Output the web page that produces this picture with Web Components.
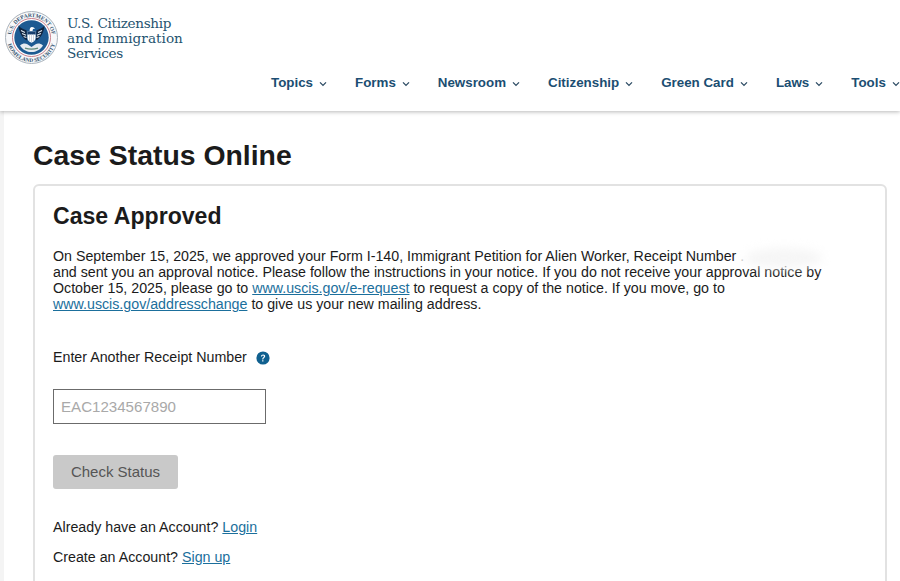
<!DOCTYPE html>
<html lang="en">
<head>
<meta charset="utf-8">
<title>Case Status Online</title>
<style>
  html, body { margin: 0; height: 581px; overflow: hidden; background: #fff; }
  body { font-family: "Liberation Sans", Arial, sans-serif; color: #1b1b1b; }
</style>
</head>
<body>
<uscis-page>
  <uscis-header slot="header"></uscis-header>
  <status-card heading="Case Approved">
    <case-message></case-message>
    <receipt-form></receipt-form>
    <account-links></account-links>
  </status-card>
</uscis-page>

<script>
class UscisPage extends HTMLElement {
  constructor() {
    super();
    this.attachShadow({ mode: 'open' }).innerHTML = `
      <style>
        :host { display: block; height: 581px; overflow: hidden; }
        main {
          margin-left: 4px;
          padding: 27px 14px 0 29px;
          background: #fff;
        }
        .wrap { background: #f4f4f4; height: 470px; }
        h1 {
          margin: 0 0 12px;
          font-size: 28.4px;
          line-height: 34px;
          font-weight: 700;
          color: #1b1b1b;
        }
      </style>
      <slot name="header"></slot>
      <div class="wrap">
        <main>
          <h1>Case Status Online</h1>
          <slot></slot>
        </main>
      </div>
    `;
  }
}

class UscisHeader extends HTMLElement {
  constructor() {
    super();
    const items = ['Topics', 'Forms', 'Newsroom', 'Citizenship', 'Green Card', 'Laws', 'Tools'];
    this.attachShadow({ mode: 'open' }).innerHTML = `
      <style>
        :host {
          display: block;
          height: 111px;
          box-sizing: border-box;
          background: #fff;
          box-shadow: 0 1px 4px rgba(0, 0, 0, .28);
          position: relative;
          overflow: hidden;
        }
        .brand { display: flex; align-items: flex-start; gap: 9px; padding: 11px 0 0 5px; }
        .name {
          font-family: "DejaVu Serif", "Liberation Serif", serif;
          font-size: 13.6px;
          line-height: 15px;
          color: #25536f;
          padding-top: 5px;
        }
        .l1 { letter-spacing: -.32px; }
        .l2 { letter-spacing: .03px; }
        nav { display: flex; padding: 10px 0 0 271px; white-space: nowrap; }
        a {
          display: flex;
          flex: none;
          align-items: center;
          gap: 6px;
          font-size: 13.35px;
          line-height: 18px;
          font-weight: 700;
          color: #1b4e72;
          text-decoration: none;
        }
        a + a { margin-left: 28px; }
        svg.chev { width: 8px; height: 6px; margin-top: 1px; }
      </style>
      <div class="brand">
        <dhs-seal></dhs-seal>
        <div class="name"><span class="l1">U.S. Citizenship</span><br><span class="l2">and Immigration</span><br><span class="l1">Services</span></div>
      </div>
      <nav>
        ${items.map((t) => `<a href="#">${t}<svg class="chev" viewBox="0 0 8 6"><path d="M1 1.4 4 4.4 7 1.4" fill="none" stroke="#2b4a63" stroke-width="1.3"/></svg></a>`).join('')}
      </nav>
    `;
  }
}

class DhsSeal extends HTMLElement {
  constructor() {
    super();
    this.attachShadow({ mode: 'open' }).innerHTML = `
      <style>
        :host { display: block; width: 53px; height: 53px; flex: none; }
        svg { display: block; width: 53px; height: 53px; }
        text { font-family: "Liberation Serif", serif; font-size: 5.5px; font-weight: 700; fill: #33536f; }
      </style>
      <svg viewBox="0 0 53 53">
        <defs>
          <path id="top" d="M6.31 30.06A20.5 20.5 0 1 1 46.69 30.06"/>
          <path id="bot" d="M2.09 28.64A24.5 24.5 0 0 0 50.91 28.64"/>
        </defs>
        <circle cx="26.5" cy="26.5" r="26" fill="#f7f8fa" stroke="#a9b2bb" stroke-width="1"/>
        <circle cx="26.5" cy="26.5" r="19" fill="#fff" stroke="#c2707f" stroke-width=".9"/>
        <circle cx="26.5" cy="26.5" r="17.2" fill="#1d5a92"/>
        <text><textPath href="#top" startOffset="50%" text-anchor="middle">U.S. DEPARTMENT OF</textPath></text>
        <text><textPath href="#bot" startOffset="50%" text-anchor="middle">HOMELAND SECURITY</textPath></text>
        <!-- wings -->
        <path d="M13.5 14.5C15.5 17 18.5 18.5 21.5 19.2L22 29.5C17.5 27.5 14 21.5 13.5 14.5Z" fill="#10243f"/>
        <path d="M39.5 14.5C37.5 17 34.5 18.5 31.5 19.2L31 29.5C35.5 27.5 39 21.5 39.5 14.5Z" fill="#10243f"/>
        <path d="M16 19.5 20 21.5M17 22.5 21 24.2M18.6 25.4 21.4 26.6M37 19.5 33 21.5M36 22.5 32 24.2M34.4 25.4 31.6 26.6" stroke="#dfe8f0" stroke-width="1.1"/>
        <!-- shield -->
        <path d="M22.4 20.5h8.2v6.5c0 2.4-2 3.7-4.1 4.8-2.1-1.1-4.1-2.4-4.1-4.8z" fill="#fff"/>
        <path d="M22.4 20.5h8.2v3H22.4z" fill="#173f6e"/>
        <path d="M24.5 23.5v6.6M26.5 23.5v7.6M28.5 23.5v6.6" stroke="#b9c6d6" stroke-width=".7"/>
        <!-- head -->
        <path d="M24.6 20c0-2.4.8-3.9 2.4-3.9 1.5 0 2.1.9 3 1.7l-2.1.3c0 .7 0 1.2-.5 1.9z" fill="#fff"/>
        <!-- lower field -->
        <path d="M15 34.5c3-2.6 5.6-2.3 7.4-1.2l4.1 2.7 4.1-2.7c1.8-1.1 4.4-1.4 7.4 1.2-2.6 4.2-6.7 6.6-11.5 6.6s-8.9-2.4-11.5-6.6z" fill="#e6ebf1"/>
        <path d="M20 37.2c4.2 1.3 8.8 1.3 13 0" stroke="#5f8a7a" stroke-width="1.3" fill="none"/>
      </svg>
    `;
  }
}

class StatusCard extends HTMLElement {
  constructor() {
    super();
    this.attachShadow({ mode: 'open' }).innerHTML = `
      <style>
        :host {
          display: block;
          box-sizing: border-box;
          width: 854px;
          height: 420px;
          padding: 17px 18px 0;
          background: #fff;
          border: 2px solid #e2e2e2;
          border-radius: 6px;
        }
        h2 {
          margin: 0 0 18px;
          font-size: 23.1px;
          line-height: 27px;
          font-weight: 700;
          color: #1b1b1b;
        }
      </style>
      <h2></h2>
      <slot></slot>
    `;
  }

  connectedCallback() {
    this.shadowRoot.querySelector('h2').textContent = this.getAttribute('heading');
  }
}

class CaseMessage extends HTMLElement {
  constructor() {
    super();
    this.attachShadow({ mode: 'open' }).innerHTML = `
      <style>
        :host { display: block; position: relative; font-size: 14.22px; line-height: 16.1px; color: #1b1b1b; white-space: nowrap; }
        a { color: #1b6f9c; text-decoration: underline; }
        .dot { color: #c9c9c9; }
        .smudge {
          position: absolute;
          left: 692px;
          top: 0;
          width: 78px;
          height: 20px;
          border-radius: 50%;
          background: #f6f6f6;
          filter: blur(5px);
        }
      </style>
      <p style="margin:0">On September 15, 2025, we approved your Form I-140, Immigrant Petition for Alien Worker, Receipt Number <span class="dot">.</span><br>
      and sent you an approval notice. Please follow the instructions in your notice. If you do not receive your approval notice by<br>
      October 15, 2025, please go to <a href="#">www.uscis.gov/e-request</a> to request a copy of the notice. If you move, go to<br>
      <a href="#">www.uscis.gov/addresschange</a> to give us your new mailing address.</p>
      <div class="smudge"></div>
    `;
  }
}

class ReceiptForm extends HTMLElement {
  constructor() {
    super();
    this.attachShadow({ mode: 'open' }).innerHTML = `
      <style>
        :host { display: block; padding-top: 34.4px; font-size: 14.24px; color: #1b1b1b; }
        label { display: flex; align-items: center; gap: 9px; line-height: 20px; }
        svg { width: 14px; height: 14px; margin-top: 3px; }
        input {
          display: block;
          box-sizing: border-box;
          width: 213px;
          height: 35px;
          margin-top: 22px;
          padding: 0 7px;
          border: 1px solid #6b6b6b;
          border-radius: 0;
          font: 15.1px "Liberation Sans", Arial, sans-serif;
          outline: none;
        }
        input::placeholder { color: #a9a9a9; opacity: 1; }
        button {
          display: block;
          width: 125px;
          height: 34px;
          margin-top: 31px;
          padding: 0;
          border: 0;
          border-radius: 3px;
          background: #c9c9c9;
          color: #555;
          font: 15px "Liberation Sans", Arial, sans-serif;
        }
      </style>
      <label>Enter Another Receipt Number
        <svg viewBox="0 0 14 14">
          <circle cx="7" cy="7" r="6.6" fill="#10608f"/>
          <path d="M4.9 5.4c.1-1.3 1-2 2.2-2 1.3 0 2.1.8 2.1 1.8 0 1.6-1.8 1.6-1.9 3.2H6.2c0-2 1.7-2 1.7-3.1 0-.5-.3-.8-.9-.8-.6 0-.9.4-1 1z" fill="#fff"/>
          <rect x="6.2" y="9.2" width="1.2" height="1.3" fill="#fff"/>
        </svg>
      </label>
      <input type="text" placeholder="EAC1234567890">
      <button type="button">Check Status</button>
    `;
  }
}

class AccountLinks extends HTMLElement {
  constructor() {
    super();
    this.attachShadow({ mode: 'open' }).innerHTML = `
      <style>
        :host { display: block; padding-top: 28px; font-size: 14.24px; line-height: 20px; color: #1b1b1b; }
        p { margin: 0 0 10px; }
        a { color: #1b6f9c; text-decoration: underline; }
      </style>
      <p>Already have an Account? <a href="#">Login</a></p>
      <p>Create an Account? <a href="#">Sign up</a></p>
    `;
  }
}

customElements.define('uscis-page', UscisPage);
customElements.define('uscis-header', UscisHeader);
customElements.define('dhs-seal', DhsSeal);
customElements.define('status-card', StatusCard);
customElements.define('case-message', CaseMessage);
customElements.define('receipt-form', ReceiptForm);
customElements.define('account-links', AccountLinks);
</script>
</body>
</html>
